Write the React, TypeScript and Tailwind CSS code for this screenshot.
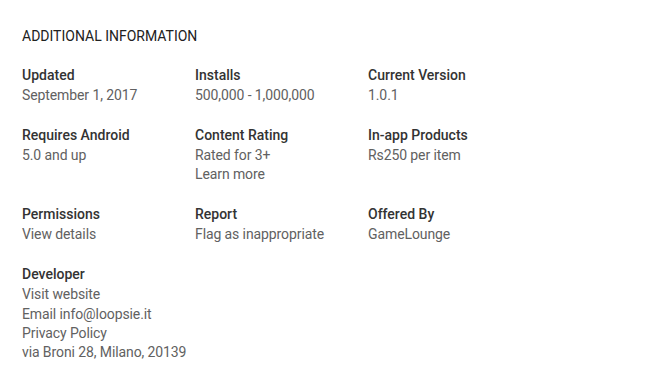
const items: { label: string; values: string[] }[] = [
  { label: "Updated", values: ["September 1, 2017"] },
  { label: "Installs", values: ["500,000 - 1,000,000"] },
  { label: "Current Version", values: ["1.0.1"] },
  { label: "Requires Android", values: ["5.0 and up"] },
  { label: "Content Rating", values: ["Rated for 3+", "Learn more"] },
  { label: "In-app Products", values: ["Rs250 per item"] },
  { label: "Permissions", values: ["View details"] },
  { label: "Report", values: ["Flag as inappropriate"] },
  { label: "Offered By", values: ["GameLounge"] },
  {
    label: "Developer",
    values: [
      "Visit website",
      "Email info@loopsie.it",
      "Privacy Policy",
      "via Broni 28, Milano, 20139",
    ],
  },
];

export default function App() {
  return (
    <div className="min-h-screen bg-white pl-[22px] pt-[26px] font-['Roboto',sans-serif] text-[14px]">
      <h2 className="leading-[20px] text-[#212121] uppercase">Additional Information</h2>
      <div className="mt-[19px] grid grid-cols-[173px_173px_173px]">
        {items.map((item) => (
          <div key={item.label} className="pb-[19.7px]">
            <div className="font-medium leading-[21px] text-[#333333]">{item.label}</div>
            {item.values.map((v) => (
              <div key={v} className="leading-[19.3px] tracking-[-0.1px] text-[#616161]">
                {v}
              </div>
            ))}
          </div>
        ))}
      </div>
    </div>
  );
}
